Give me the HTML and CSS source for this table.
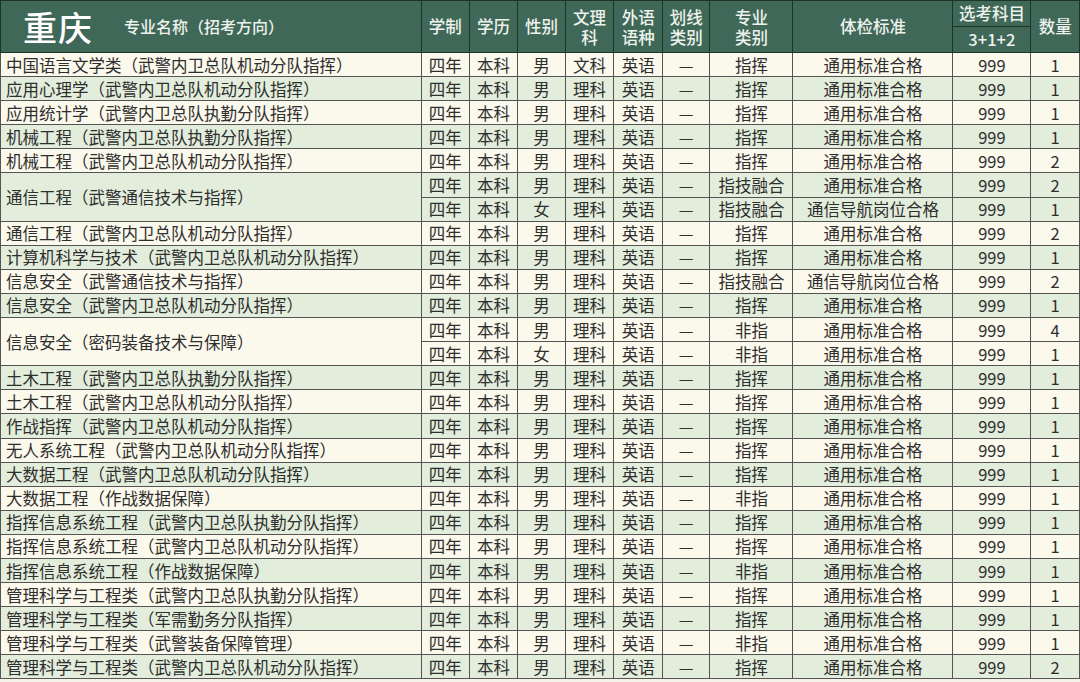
FILE: index.html
```html
<!DOCTYPE html>
<html lang="zh-CN">
<head>
<meta charset="utf-8">
<title>重庆</title>
<link rel="stylesheet" href="styles.css">
</head>
<body>
<table class="plan">
<colgroup>
<col class="c-name"><col class="c-48"><col class="c-49"><col class="c-48"><col class="c-49"><col class="c-49"><col class="c-48"><col class="c-type"><col class="c-body"><col class="c-sel"><col class="c-num">
</colgroup>
<thead>
<tr class="h1">
<th rowspan="2" class="h-name"><span class="city">重庆</span><span class="h-title">专业名称（招考方向）</span></th>
<th rowspan="2">学制</th>
<th rowspan="2">学历</th>
<th rowspan="2">性别</th>
<th rowspan="2" class="two">文理<br>科</th>
<th rowspan="2" class="two">外语<br>语种</th>
<th rowspan="2" class="two">划线<br>类别</th>
<th rowspan="2" class="two">专业<br>类别</th>
<th rowspan="2">体检标准</th>
<th class="sub">选考科目</th>
<th rowspan="2">数量</th>
</tr>
<tr class="h2"><th class="sub">3+1+2</th></tr>
</thead>
<tbody>
<tr class="a"><td class="name">中国语言文学类（武警内卫总队机动分队指挥）</td><td>四年</td><td>本科</td><td>男</td><td>文科</td><td>英语</td><td>—</td><td>指挥</td><td>通用标准合格</td><td>999</td><td>1</td></tr>
<tr class="b"><td class="name">应用心理学（武警内卫总队机动分队指挥）</td><td>四年</td><td>本科</td><td>男</td><td>理科</td><td>英语</td><td>—</td><td>指挥</td><td>通用标准合格</td><td>999</td><td>1</td></tr>
<tr class="a"><td class="name">应用统计学（武警内卫总队执勤分队指挥）</td><td>四年</td><td>本科</td><td>男</td><td>理科</td><td>英语</td><td>—</td><td>指挥</td><td>通用标准合格</td><td>999</td><td>1</td></tr>
<tr class="b"><td class="name">机械工程（武警内卫总队执勤分队指挥）</td><td>四年</td><td>本科</td><td>男</td><td>理科</td><td>英语</td><td>—</td><td>指挥</td><td>通用标准合格</td><td>999</td><td>1</td></tr>
<tr class="a"><td class="name">机械工程（武警内卫总队机动分队指挥）</td><td>四年</td><td>本科</td><td>男</td><td>理科</td><td>英语</td><td>—</td><td>指挥</td><td>通用标准合格</td><td>999</td><td>2</td></tr>
<tr class="b"><td class="name" rowspan="2">通信工程（武警通信技术与指挥）</td><td>四年</td><td>本科</td><td>男</td><td>理科</td><td>英语</td><td>—</td><td>指技融合</td><td>通用标准合格</td><td>999</td><td>2</td></tr>
<tr class="b"><td>四年</td><td>本科</td><td>女</td><td>理科</td><td>英语</td><td>—</td><td>指技融合</td><td>通信导航岗位合格</td><td>999</td><td>1</td></tr>
<tr class="a"><td class="name">通信工程（武警内卫总队机动分队指挥）</td><td>四年</td><td>本科</td><td>男</td><td>理科</td><td>英语</td><td>—</td><td>指挥</td><td>通用标准合格</td><td>999</td><td>2</td></tr>
<tr class="b"><td class="name">计算机科学与技术（武警内卫总队机动分队指挥）</td><td>四年</td><td>本科</td><td>男</td><td>理科</td><td>英语</td><td>—</td><td>指挥</td><td>通用标准合格</td><td>999</td><td>1</td></tr>
<tr class="a"><td class="name">信息安全（武警通信技术与指挥）</td><td>四年</td><td>本科</td><td>男</td><td>理科</td><td>英语</td><td>—</td><td>指技融合</td><td>通信导航岗位合格</td><td>999</td><td>2</td></tr>
<tr class="b"><td class="name">信息安全（武警内卫总队机动分队指挥）</td><td>四年</td><td>本科</td><td>男</td><td>理科</td><td>英语</td><td>—</td><td>指挥</td><td>通用标准合格</td><td>999</td><td>1</td></tr>
<tr class="a"><td class="name" rowspan="2">信息安全（密码装备技术与保障）</td><td>四年</td><td>本科</td><td>男</td><td>理科</td><td>英语</td><td>—</td><td>非指</td><td>通用标准合格</td><td>999</td><td>4</td></tr>
<tr class="a"><td>四年</td><td>本科</td><td>女</td><td>理科</td><td>英语</td><td>—</td><td>非指</td><td>通用标准合格</td><td>999</td><td>1</td></tr>
<tr class="b"><td class="name">土木工程（武警内卫总队执勤分队指挥）</td><td>四年</td><td>本科</td><td>男</td><td>理科</td><td>英语</td><td>—</td><td>指挥</td><td>通用标准合格</td><td>999</td><td>1</td></tr>
<tr class="a"><td class="name">土木工程（武警内卫总队机动分队指挥）</td><td>四年</td><td>本科</td><td>男</td><td>理科</td><td>英语</td><td>—</td><td>指挥</td><td>通用标准合格</td><td>999</td><td>1</td></tr>
<tr class="b"><td class="name">作战指挥（武警内卫总队机动分队指挥）</td><td>四年</td><td>本科</td><td>男</td><td>理科</td><td>英语</td><td>—</td><td>指挥</td><td>通用标准合格</td><td>999</td><td>1</td></tr>
<tr class="a"><td class="name">无人系统工程（武警内卫总队机动分队指挥）</td><td>四年</td><td>本科</td><td>男</td><td>理科</td><td>英语</td><td>—</td><td>指挥</td><td>通用标准合格</td><td>999</td><td>1</td></tr>
<tr class="b"><td class="name">大数据工程（武警内卫总队机动分队指挥）</td><td>四年</td><td>本科</td><td>男</td><td>理科</td><td>英语</td><td>—</td><td>指挥</td><td>通用标准合格</td><td>999</td><td>1</td></tr>
<tr class="a"><td class="name">大数据工程（作战数据保障）</td><td>四年</td><td>本科</td><td>男</td><td>理科</td><td>英语</td><td>—</td><td>非指</td><td>通用标准合格</td><td>999</td><td>1</td></tr>
<tr class="b"><td class="name">指挥信息系统工程（武警内卫总队执勤分队指挥）</td><td>四年</td><td>本科</td><td>男</td><td>理科</td><td>英语</td><td>—</td><td>指挥</td><td>通用标准合格</td><td>999</td><td>1</td></tr>
<tr class="a"><td class="name">指挥信息系统工程（武警内卫总队机动分队指挥）</td><td>四年</td><td>本科</td><td>男</td><td>理科</td><td>英语</td><td>—</td><td>指挥</td><td>通用标准合格</td><td>999</td><td>1</td></tr>
<tr class="b"><td class="name">指挥信息系统工程（作战数据保障）</td><td>四年</td><td>本科</td><td>男</td><td>理科</td><td>英语</td><td>—</td><td>非指</td><td>通用标准合格</td><td>999</td><td>1</td></tr>
<tr class="a"><td class="name">管理科学与工程类（武警内卫总队执勤分队指挥）</td><td>四年</td><td>本科</td><td>男</td><td>理科</td><td>英语</td><td>—</td><td>指挥</td><td>通用标准合格</td><td>999</td><td>1</td></tr>
<tr class="b"><td class="name">管理科学与工程类（军需勤务分队指挥）</td><td>四年</td><td>本科</td><td>男</td><td>理科</td><td>英语</td><td>—</td><td>指挥</td><td>通用标准合格</td><td>999</td><td>1</td></tr>
<tr class="a"><td class="name">管理科学与工程类（武警装备保障管理）</td><td>四年</td><td>本科</td><td>男</td><td>理科</td><td>英语</td><td>—</td><td>非指</td><td>通用标准合格</td><td>999</td><td>1</td></tr>
<tr class="b"><td class="name">管理科学与工程类（武警内卫总队机动分队指挥）</td><td>四年</td><td>本科</td><td>男</td><td>理科</td><td>英语</td><td>—</td><td>指挥</td><td>通用标准合格</td><td>999</td><td>2</td></tr>
</tbody>
</table>
</body>
</html>
```
FILE: styles.css
```css
html, body {
  margin: 0;
  padding: 0;
  background: #f4f1e6;
}
body {
  font-family: "Noto Sans CJK SC", "Noto Sans", sans-serif;
  color: #2e2e2e;
}
.plan {
  width: 1080px;
  table-layout: fixed;
  border-collapse: collapse;
  border: 1px solid #4b4b4b;
}
.c-name { width: 416px; }
.c-48 { width: 47px; }
.c-49 { width: 48px; }
.c-type { width: 82px; }
.c-body { width: 158px; }
.c-sel { width: 77px; }
.c-num { width: 48px; }

th {
  background: #3f6858;
  color: #eef2ec;
  font-weight: 500;
  font-size: 16.5px;
  line-height: 21px;
  padding: 0;
  border: 1.5px solid #1e3429;
  text-align: center;
  vertical-align: middle;
}
.h1 { height: 26px; }
.h2 { height: 26px; }
th.two { line-height: 20px; }
.h-name {
  text-align: left;
}
.h-name .city {
  display: inline-block;
  font-size: 34px;
  font-weight: 500;
  color: #ffffff;
  margin-left: 22px;
  letter-spacing: 1px;
  vertical-align: middle;
  line-height: 40px;
}
.h-name .h-title {
  display: inline-block;
  margin-left: 31px;
  vertical-align: middle;
  font-size: 16px;
}

td {
  font-size: 16.5px;
  line-height: 20px;
  height: 23.1px;
  padding: 0;
  text-align: center;
  vertical-align: middle;
  border: 1px solid #545454;
  white-space: nowrap;
  overflow: hidden;
}
td.name {
  text-align: left;
  padding-left: 5px;
}
tr.a td { background: #fbf8ec; }
tr.b td { background: #e3eddc; }
```
